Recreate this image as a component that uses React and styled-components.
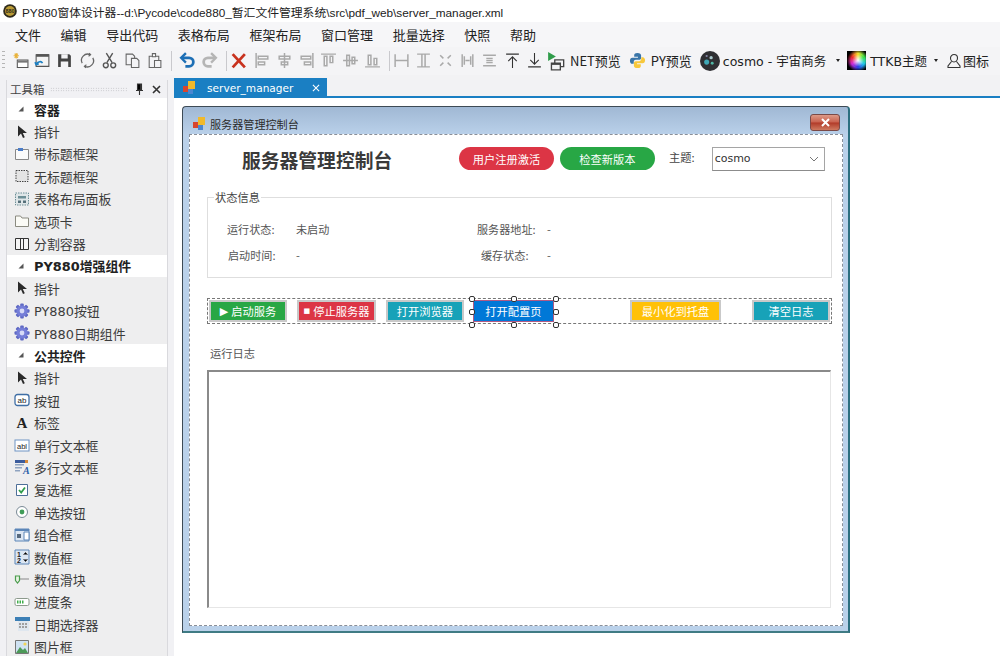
import React from 'react';
import styled, { createGlobalStyle } from 'styled-components';

const CJK = '"Noto Sans CJK SC", "Noto Sans", sans-serif';
const WIDE = '"DejaVu Sans", "Noto Sans CJK SC", sans-serif';

const Global = createGlobalStyle`
  html, body { margin: 0; padding: 0; background: #fff; }
  * { box-sizing: border-box; }
`;

const Page = styled.div`
  width: 1000px;
  height: 656px;
  overflow: hidden;
  display: flex;
  flex-direction: column;
  font-family: ${CJK};
  color: #333;
`;

const TitleBar = styled.div`
  height: 22px;
  display: flex;
  align-items: center;
  gap: 5px;
  padding-left: 3px;
  background: #fff;
  font-family: "Liberation Sans", "Noto Sans CJK SC", sans-serif;
  font-size: 11.8px;
  color: #222;
  white-space: nowrap;
`;

const MenuBar = styled.div`
  height: 25px;
  display: flex;
  align-items: center;
  padding-left: 15px;
  background: #f6f6f8;
`;

const MenuItem = styled.span`
  font-size: 13px;
  color: #222;
  margin-right: 19.6px;
  white-space: nowrap;
`;

const ToolBar = styled.div`
  height: 28px;
  display: flex;
  align-items: center;
  padding: 0 0 1px 2px;
  background: #f4f4f6;
  font-size: 13px;
  color: #222;
  white-space: nowrap;
`;

const Grip = styled.div`
  width: 3px;
  height: 20px;
  margin-right: 4px;
  background: repeating-linear-gradient(to bottom, #b5b5b5 0 1px, transparent 1px 4px);
`;

const ToolBtn = styled.div`
  width: 22px;
  height: 22px;
  flex: none;
  display: flex;
  align-items: center;
  justify-content: center;
  margin-left: ${({ $left }) => $left || 0}px;
  & > svg {
    width: ${({ $big }) => ($big ? 20 : 17)}px;
    height: ${({ $big }) => ($big ? 20 : 17)}px;
  }
`;

const ToolSep = styled.div`
  width: 1px;
  height: 20px;
  margin: 0 ${({ $right }) => $right}px 0 ${({ $left }) => $left}px;
  background: #c9c9cd;
  flex: none;
`;

const ToolLabel = styled.span`
  font-family: ${({ $wide }) => ($wide ? WIDE : CJK)};
  font-size: ${({ $wide }) => ($wide ? 12.5 : 13)}px;
  margin-left: ${({ $left }) => $left || 0}px;
  margin-right: ${({ $right }) => $right || 0}px;
`;

const Caret = styled.span`
  width: 0;
  height: 0;
  flex: none;
  border-left: 2.5px solid transparent;
  border-right: 2.5px solid transparent;
  border-top: 3px solid #222;
  margin-left: ${({ $left }) => $left}px;
  margin-right: ${({ $right }) => $right}px;
`;

const Rainbow = styled.div`
  width: 19px;
  height: 19px;
  flex: none;
  background:
    radial-gradient(circle at 58% 50%, #fff 0, rgba(255,255,255,0) 42%),
    radial-gradient(circle at 58% 50%, rgba(0,0,0,0) 48%, #000 76%),
    conic-gradient(from 0deg at 58% 50%, #f6e32a, #37e04a, #20c8e8, #2b3ce8, #d02ad8, #f02a2a, #f6e32a);
`;

const Body = styled.div`
  flex: 1;
  min-height: 0;
  display: flex;
`;

const Sidebar = styled.div`
  width: 174px;
  flex: none;
  padding: 5px 6px 0 6px;
  background: #f1f1f4;
`;

const Panel = styled.div`
  height: 100%;
  border-left: 1px solid #d9d9dd;
  border-right: 1px solid #d9d9dd;
  background: #eeeeef;
`;

const PanelHead = styled.div`
  height: 18px;
  display: flex;
  align-items: center;
  padding: 0 6px 0 3px;
  background: #f1f1f4;
  font-size: 11.5px;
  color: #444;
`;

const HeadDots = styled.div`
  flex: 1;
  height: 5px;
  margin: 0 8px 0 5px;
  background-image: radial-gradient(#b8b8bc 0.6px, transparent 0.7px);
  background-size: 2.5px 2.5px;
`;

const HeadGap = styled.span`
  width: 8px;
`;

const Row = styled.div`
  height: 22.4px;
  display: flex;
  align-items: center;
  padding-left: ${({ $section }) => ($section ? 10 : 6)}px;
  background: ${({ $section }) => ($section ? '#ffffff' : 'transparent')};
  font-family: ${WIDE};
  font-size: 12.9px;
  font-weight: ${({ $section }) => ($section ? 700 : 400)};
  color: ${({ $section }) => ($section ? '#222' : '#3c3c3c')};
  white-space: nowrap;
`;

const RowIcon = styled.div`
  width: ${({ $section }) => ($section ? 17 : 21)}px;
  height: 16px;
  flex: none;
  display: flex;
  align-items: center;
  justify-content: ${({ $section }) => ($section ? 'flex-start' : 'center')};
  padding-right: ${({ $section }) => ($section ? 0 : 3)}px;
`;

const Main = styled.div`
  flex: 1;
  min-width: 0;
  display: flex;
  flex-direction: column;
  background: #fff;
`;

const TabStrip = styled.div`
  height: 23px;
  flex: none;
  display: flex;
  align-items: flex-end;
  background: #f2f2f4;
  border-bottom: 2px solid #1a7fc3;
`;

const Tab = styled.div`
  width: 153px;
  height: 18px;
  display: flex;
  align-items: center;
  padding: 1px 7px 0 8px;
  background: #1a7fc3;
  color: #fff;
  font-family: ${WIDE};
  font-size: 10.6px;
`;

const TabName = styled.span`
  flex: 1;
  margin-left: 9px;
`;

const Canvas = styled.div`
  flex: 1;
  padding: 8px 0 0 8px;
`;

const FormWindow = styled.div`
  width: 668px;
  height: 527px;
  display: flex;
  flex-direction: column;
  padding: 0 5px 5px 6px;
  border: 1px solid #3d4a55;
  border-bottom: 2px solid #3f7b84;
  border-right: 2px solid #2c6f80;
  border-radius: 4px 4px 0 0;
  background: linear-gradient(to bottom, #a0b8d4 0, #bad1ea 28px, #bad1ea 100%);
`;

const FormTitle = styled.div`
  height: 27px;
  flex: none;
  display: flex;
  align-items: center;
  padding: 6px 0 0 3px;
  font-size: 11.1px;
  color: #2c2c2c;
`;

const FormTitleText = styled.span`
  flex: 1;
  margin-left: 2px;
`;

const CloseBtn = styled.div`
  width: 30px;
  height: 17px;
  margin: -2px 3px 0 0;
  display: flex;
  align-items: center;
  justify-content: center;
  border: 1px solid #7a4a48;
  border-radius: 3px;
  background: linear-gradient(to bottom, #dd9a88 0, #c9614e 48%, #b13a28 52%, #cf7a60 100%);
`;

const DesignSurface = styled.div`
  flex: 1;
  position: relative;
  padding: 11px 10px 17px 17px;
  background: #fff;
  border: 1px dashed #8a8f98;
  display: flex;
  flex-direction: column;
`;

const HeaderRow = styled.div`
  height: 25px;
  display: flex;
  align-items: center;
  flex: none;
`;

const Heading = styled.div`
  font-size: 18.8px;
  font-weight: 700;
  color: #3a3a3a;
  margin: 2px 0 0 35px;
  width: 217px;
  white-space: nowrap;
`;

const Pill = styled.div`
  width: 95px;
  height: 23px;
  margin-right: 6px;
  border-radius: 12px;
  display: flex;
  align-items: center;
  justify-content: center;
  background: ${({ $color }) => $color};
  color: #fff;
  font-size: 11.25px;
`;

const ThemeLabel = styled.div`
  font-size: 11.25px;
  color: #444;
  margin: -3px 17px 0 8px;
  white-space: nowrap;
`;

const Combo = styled.div`
  width: 113px;
  height: 24px;
  display: flex;
  align-items: center;
  justify-content: space-between;
  padding: 0 5px 0 2px;
  border: 1px solid #a5a5a5;
  border-bottom-color: #8c8c8c;
  font-family: ${WIDE};
  font-size: 11px;
  color: #333;
`;

const GroupBox = styled.div`
  position: relative;
  height: 81px;
  margin-top: 26px;
  flex: none;
  border: 1px solid #dedede;
  padding: 18px 0 0 19px;
  display: grid;
  grid-template-columns: 69px 181px 70px 1fr;
  grid-auto-rows: 26px;
  align-items: center;
  font-size: 11.1px;
  color: #555;
`;

const Legend = styled.div`
  position: absolute;
  top: -8px;
  left: 6px;
  padding: 0 1px;
  background: #fff;
  font-size: 11.25px;
  line-height: 15px;
  color: #444;
`;

const FieldLabel = styled.span`
  padding-left: ${({ $indent }) => $indent || 0}px;
  white-space: nowrap;
`;

const ButtonStrip = styled.div`
  height: 26px;
  margin-top: 20px;
  flex: none;
  display: flex;
  align-items: center;
  width: 625px;
  border: 1px dashed #777;
`;

const ActionBtn = styled.div`
  position: relative;
  width: ${({ $width }) => $width}px;
  height: 22px;
  margin-left: ${({ $left }) => $left}px;
  flex: none;
  display: flex;
  align-items: center;
  justify-content: center;
  background: ${({ $color }) => $color};
  border: 2px solid #c9c9c9;
  color: #fff;
  font-size: 11.25px;
  white-space: nowrap;
`;

const SelectedBtn = styled(ActionBtn)`
  border: 1px solid #b05a86;
`;

const Glyph = styled.span`
  font-family: "DejaVu Sans", sans-serif;
  font-size: ${({ $size }) => $size}px;
  margin-right: ${({ $gap }) => $gap}px;
`;

const Handle = styled.span`
  position: absolute;
  left: ${({ $x }) => $x}px;
  top: ${({ $y }) => $y}px;
  width: 6px;
  height: 6px;
  border: 1px solid #333;
  border-radius: 2px;
  background: #fff;
`;

const LogLabel = styled.div`
  margin: 21px 0 0 3px;
  height: 16px;
  line-height: 16px;
  flex: none;
  font-size: 11.25px;
  color: #555;
`;

const LogBox = styled.div`
  flex: 1;
  width: 624px;
  margin-top: 9px;
  background: #fff;
  border-top: 2px solid #8a8a8a;
  border-left: 2px solid #8a8a8a;
  border-right: 1px solid #e6e6e6;
  border-bottom: 1px solid #e6e6e6;
`;

/* small drawings */
const Svg = ({ children, w = 16, h = 16 }) => (
  <svg width={w} height={h} viewBox={`0 0 ${w} ${h}`} fill="none">{children}</svg>
);

const Gray = ({ d }) => (
  <Svg><path d={d} stroke="#a9a9a9" strokeWidth="1.4" /></Svg>
);

const ALIGN = [
  'M2 1v14M4 4h9v2.5H4zM4 9.5h6V12H4z',
  'M8 1v14M3 4h10v2.5H3zM5 9.5h6V12H5z',
  'M14 1v14M3 4h9v2.5H3zM6 9.5h6V12H6z',
  'M1 2h14M4 4v9h2.5V4zM9.5 4v6H12V4z',
  'M1 8h14M4.5 3v10H7V3zM9.5 5v6H12V5z',
  'M1 14h14M4 3v9h2.5V3zM9.5 6v6H12V6z',
];
const SIZE = [
  'M2 2v12M14 2v12M2 8h12',
  'M2 2h12M2 14h12M6.5 2v12M9.5 2v12',
  'M3 3l3 3M13 3l-3 3M3 13l3-3M13 13l-3-3',
  'M3 2v12M13 2v12M6 8h4M5 4v8M11 4v8',
  'M2 3h12M2 13h12M5 8h6M5 6h6M5 10h6',
];

const FormIcon = () => (
  <Svg>
    <path d="M4 1v5M1.500 3.500h5M2.500 1.500l3 4M5.500 1.500l-3 4" stroke="#e8b23c" strokeWidth="1" />
    <path d="M5 7.500h10v7H5z" fill="#fff" stroke="#555" />
    <path d="M5 8h10v2H5z" fill="#777" />
  </Svg>
);
const OpenIcon = () => (
  <Svg>
    <path d="M2 2.500h12v11H2z" fill="#f4f4f4" stroke="#555" />
    <path d="M2 2h12v2.500H2z" fill="#555" />
    <path d="M2 11.500c2-3 5-3 6-1M1 9.500l1 2.500 2.500-1" stroke="#1b7fc3" strokeWidth="1.500" />
  </Svg>
);
const SaveIcon = () => (
  <Svg>
    <path d="M2 2h10.500L14 3.500V14H2z" fill="#444" />
    <path d="M5 2h6v4H5zM4.500 9h7v5h-7z" fill="#f4f4f6" />
  </Svg>
);
const RefreshIcon = () => (
  <Svg>
    <path d="M3 10.500A5.800 5.800 0 0 1 10.500 2.500M13 5.500A5.800 5.800 0 0 1 5.500 13.500" stroke="#666" strokeWidth="1.200" />
    <path d="M9.500 1l1.500 1.500L9 4M6.500 15L5 13.500 7 12" stroke="#666" />
  </Svg>
);
const CutIcon = () => (
  <Svg>
    <path d="M5 1l5.500 9M11 1L5.500 10" stroke="#555" strokeWidth="1.300" />
    <circle cx="4.500" cy="12.500" r="2.300" stroke="#555" strokeWidth="1.300" />
    <circle cx="11.500" cy="12.500" r="2.300" stroke="#555" strokeWidth="1.300" />
  </Svg>
);
const CopyIcon = () => (
  <Svg>
    <path d="M2 2h6l2 2v8H2z" fill="#f4f4f6" stroke="#666" />
    <path d="M7 6h5l2 2v6.500H7z" fill="#f4f4f6" stroke="#666" />
  </Svg>
);
const PasteIcon = () => (
  <Svg>
    <path d="M3 4h9v10.500H3z" fill="#f4f4f6" stroke="#666" />
    <path d="M6 1.500h3v3H6z" fill="#fff" stroke="#666" />
    <path d="M8 8h6v6.500H8z" fill="#f4f4f6" stroke="#666" />
  </Svg>
);
const UndoIcon = ({ color = '#1d6fb5', flip }) => (
  <Svg>
    <g transform={flip ? 'matrix(-1 0 0 1 16 0)' : undefined}>
      <path d="M3 5.500h6.500a3.800 3.800 0 0 1 0 8H6" stroke={color} strokeWidth="2.600" />
      <path d="M6.500 1L2 5.500 6.500 10" stroke={color} strokeWidth="2.200" />
    </g>
  </Svg>
);
const CrossIcon = () => (
  <Svg><path d="M2.500 2l11.500 12.500M14 2L2.500 14.500" stroke="#c8321e" strokeWidth="2.600" /></Svg>
);
const UpIcon = () => (
  <Svg><path d="M2 2h12M8 4.500V15M4 8.500l4-4 4 4" stroke="#333" strokeWidth="1" /></Svg>
);
const DownIcon = () => (
  <Svg><path d="M2 14h12M8 1v10.500M4 7.500l4 4 4-4" stroke="#333" strokeWidth="1" /></Svg>
);
const NetIcon = () => (
  <Svg w={18} h={18}>
    <path d="M1 1l7 4-7 4z" fill="#2f9c4a" />
    <path d="M7 8h8v6H7z" stroke="#444" strokeWidth="1.200" />
    <path d="M4 11h8v6H4z" fill="#f4f4f6" stroke="#444" strokeWidth="1.200" />
    <path d="M4 11h8v1.500H4z" fill="#444" />
  </Svg>
);
const PythonIcon = () => (
  <Svg w={18} h={18}>
    <path d="M9 1C6 1 5.500 2.200 5.500 3.500V5H9.500v1H3.500C2 6 1 7.300 1 9.200s1 3.300 2.500 3.300H5V10.500c0-1.200 1-2.200 2.200-2.200h3.600c1.100 0 2-.9 2-2V3.500C12.800 2 11.500 1 9 1z" fill="#3a75a8" />
    <path d="M9 17c3 0 3.500-1.200 3.500-2.500V13H8.500v-1h6c1.500 0 2.500-1.300 2.500-3.200s-1-3.300-2.500-3.300H13v2c0 1.200-1 2.200-2.200 2.200H7.200c-1.100 0-2 .9-2 2v2.800C5.200 16 6.500 17 9 17z" fill="#f7c83c" />
  </Svg>
);
const CosmoIcon = () => (
  <Svg w={18} h={18}>
    <circle cx="9" cy="9" r="9" fill="#2f2f33" />
    <circle cx="6" cy="10" r="2.300" fill="#3fa7b5" />
    <circle cx="10" cy="6" r="1.500" fill="#a8c8cc" />
    <circle cx="11" cy="11" r="1.300" fill="#4fb7a5" />
    <circle cx="6" cy="4.500" r="1" fill="#88a" />
  </Svg>
);
const PersonIcon = () => (
  <Svg w={14} h={16}>
    <path d="M7 1.500a3.500 3.500 0 0 1 3.500 3.500c0 2-1.500 4-3.500 4S3.500 7 3.500 5A3.500 3.500 0 0 1 7 1.500zM4.500 8.500L1 13v1.500h12V13L9.500 8.500" stroke="#333" strokeWidth="1.100" />
  </Svg>
);
const GroupWin = () => (
  <svg width="16" height="15" viewBox="0 0 16 15">
    <path d="M1 6h6v6H1z" fill="#d8452f" />
    <path d="M6 1h7v8H6z" fill="#f0b92c" />
    <path d="M6 9h5v5H6z" fill="#4b86d0" />
  </svg>
);
const AppLogo = () => (
  <svg width="14" height="14" viewBox="0 0 14 14">
    <circle cx="7" cy="7" r="6.800" fill="#2e2a1c" />
    <circle cx="7" cy="7" r="5" fill="#b99a34" />
    <text x="7" y="9" textAnchor="middle" fontSize="5.500" fontWeight="700" fontFamily="Liberation Sans" fill="#2e2a1c">880</text>
  </svg>
);

const Arrow = () => (
  <Svg><path d="M4 1.500v11l3-3 2 4.500 1.800-.8L8.800 9H13z" fill="#2a2a2a" /></Svg>
);
const Gear = () => (
  <Svg>
    <g fill="#5f69c4">
      {[0, 45, 90, 135].map((a) => (
        <rect key={a} x="6.200" y="0.500" width="3.600" height="15" rx="1" transform={`rotate(${a} 8 8)`} />
      ))}
    </g>
    <circle cx="8" cy="8" r="5.600" fill="#757ed8" />
    <circle cx="8" cy="8" r="2.400" fill="#d7dbf7" />
  </Svg>
);
const IconPanelTitled = () => (
  <Svg><path d="M1.500 3.500h13v10h-13z" fill="#fbfbfb" stroke="#888" /><path d="M4 2h5v3H4z" fill="#4a7cc8" /></Svg>
);
const IconPanelPlain = () => (
  <Svg><path d="M2 2.500h12v11H2z" fill="#e4e4e4" stroke="#444" strokeDasharray="1.500 1" /></Svg>
);
const IconTable = () => (
  <Svg>
    <path d="M1.500 2h13v12h-13z" fill="#dfe6e8" stroke="#6d8f96" strokeDasharray="1.500 1" />
    <path d="M4 5h8v2.500H4z" fill="#6d8f96" /><path d="M4 9.500h3V12H4zM9 9.500h3V12H9z" fill="#56707a" />
  </Svg>
);
const IconFolderTab = () => (
  <Svg><path d="M1.500 3h5l1.500 2h6.500v8.500h-13z" fill="#fbfbf6" stroke="#8b8b80" /></Svg>
);
const IconSplit = () => (
  <Svg><path d="M1.500 2.500h13v11h-13zM6.500 2.500v11M9.500 2.500v11" stroke="#333" fill="#f5f5f5" /></Svg>
);
const IconButton = () => (
  <svg width="16" height="14" viewBox="0 0 16 14">
    <rect x="1" y="1.500" width="14" height="11" rx="2.500" fill="#fff" stroke="#3f6ea5" strokeWidth="1.300" />
    <text x="8" y="10" textAnchor="middle" fontSize="8" fontFamily="Liberation Sans" fill="#222">ab</text>
  </svg>
);
const IconLabel = () => (
  <svg width="16" height="16" viewBox="0 0 16 16">
    <text x="8" y="13" textAnchor="middle" fontSize="15" fontWeight="700" fontFamily="Liberation Serif" fill="#222">A</text>
  </svg>
);
const IconTextBox = () => (
  <svg width="16" height="13" viewBox="0 0 16 13">
    <rect x="1" y="1" width="14" height="11" fill="#fff" stroke="#6f94c4" />
    <text x="8" y="9.500" textAnchor="middle" fontSize="7.500" fontFamily="Liberation Sans" fill="#222">abl</text>
  </svg>
);
const IconMultiText = () => (
  <svg width="16" height="16" viewBox="0 0 16 16">
    <path d="M1 1h10v3H1z" fill="#3c5c9c" /><path d="M1 5h9v1.500H1zM1 8h7v1.500H1zM1 11h5v1.500H1z" fill="#8fa3c0" />
    <text x="9" y="15" fontSize="10" fontWeight="700" fontStyle="italic" fontFamily="Liberation Serif" fill="#2f5fa8">A</text>
    <path d="M11 1h3v3h-3z" fill="#d88a3a" />
  </svg>
);
const IconCheck = () => (
  <Svg>
    <path d="M2.500 2.500h11v11h-11z" fill="#fff" stroke="#4d6f98" />
    <path d="M5 8l2.200 2.500L11 5.500" stroke="#2f9c4a" strokeWidth="1.800" />
  </Svg>
);
const IconRadio = () => (
  <Svg>
    <circle cx="8" cy="8" r="5.500" fill="#fff" stroke="#7a8a96" />
    <circle cx="8" cy="8" r="2.400" fill="#3f9c58" />
  </Svg>
);
const IconCombo = () => (
  <Svg>
    <path d="M1 2h14v12H1z" fill="#dce6f2" stroke="#5c86b8" />
    <path d="M1 2h14v2H1z" fill="#5c86b8" />
    <path d="M10 5h5v8h-5z" fill="#fff" stroke="#5c86b8" />
    <path d="M3 7h4v4H3z" fill="#56697e" />
  </Svg>
);
const IconNumber = () => (
  <svg width="16" height="16" viewBox="0 0 16 16">
    <path d="M1 1h14v14H1z" fill="#dce6f2" stroke="#5c86b8" />
    <text x="5" y="7.500" textAnchor="middle" fontSize="7" fontWeight="700" fontFamily="Liberation Sans" fill="#222">1</text>
    <text x="5" y="14" textAnchor="middle" fontSize="7" fontWeight="700" fontFamily="Liberation Sans" fill="#222">2</text>
    <path d="M9.500 5.500L11.500 3.500 13.500 5.500M9.500 10.500l2 2 2-2" stroke="#444" />
  </svg>
);
const IconSlider = () => (
  <Svg>
    <path d="M5 8h10" stroke="#999" strokeWidth="1.200" />
    <path d="M1.500 5h4v4.500L3.500 12l-2-2.500z" fill="#e8f3e4" stroke="#4b9c4d" strokeWidth="1.200" />
  </Svg>
);
const IconProgress = () => (
  <Svg>
    <rect x="1" y="4.500" width="14" height="7" rx="1.500" fill="#fff" stroke="#8c9a8c" />
    <path d="M3 6.500h1.500v3H3zM5.500 6.500H7v3H5.500zM8 6.500h1.500v3H8z" fill="#3fae4a" />
  </Svg>
);
const IconDate = () => (
  <Svg>
    <path d="M4 1h11v14H4z" fill="#dfe7ef" />
    <path d="M1 1h15v4H1z" fill="#3c7fb5" />
    <path d="M5 7h2v2H5zM8 7h2v2H8zM11 7h2v2h-2zM5 10h2v2H5zM8 10h2v2H8zM11 10h2v2h-2z" fill="#a0a0a0" />
  </Svg>
);
const IconPicture = () => (
  <Svg>
    <path d="M1.500 1.500h13v13h-13z" fill="#cfe2f2" stroke="#777" />
    <path d="M2 14l4-6 3 3 2-2 3 5z" fill="#4c9a58" />
    <circle cx="11" cy="5" r="1.600" fill="#f2d458" />
  </Svg>
);
const Wedge = () => (
  <Svg w={8} h={8}><path d="M6.500 1.500v5h-5z" fill="#555" /></Svg>
);
const SmallX = ({ color = '#333', size = 9, width = 1.6 }) => (
  <svg width={size} height={size} viewBox="0 0 9 9"><path d="M1 1l7 7M8 1L1 8" stroke={color} strokeWidth={width} /></svg>
);
const Pin = () => (
  <svg width="9" height="12" viewBox="0 0 9 12"><path d="M2.500 1h4v6h-4zM1 7.500h7M4.500 8v4M5.500 1v6" stroke="#333" strokeWidth="1.100" /></svg>
);
const Chevron = () => (
  <svg width="10" height="6" viewBox="0 0 10 6"><path d="M1 1l4 4 4-4" stroke="#777" strokeWidth="1" fill="none" /></svg>
);

const MENUS = ['文件', '编辑', '导出代码', '表格布局', '框架布局', '窗口管理', '批量选择', '快照', '帮助'];

const TOOLBOX = [
  { title: '容器' },
  { icon: <Arrow />, name: '指针' },
  { icon: <IconPanelTitled />, name: '带标题框架' },
  { icon: <IconPanelPlain />, name: '无标题框架' },
  { icon: <IconTable />, name: '表格布局面板' },
  { icon: <IconFolderTab />, name: '选项卡' },
  { icon: <IconSplit />, name: '分割容器' },
  { title: 'PY880增强组件' },
  { icon: <Arrow />, name: '指针' },
  { icon: <Gear />, name: 'PY880按钮' },
  { icon: <Gear />, name: 'PY880日期组件' },
  { title: '公共控件' },
  { icon: <Arrow />, name: '指针' },
  { icon: <IconButton />, name: '按钮' },
  { icon: <IconLabel />, name: '标签' },
  { icon: <IconTextBox />, name: '单行文本框' },
  { icon: <IconMultiText />, name: '多行文本框' },
  { icon: <IconCheck />, name: '复选框' },
  { icon: <IconRadio />, name: '单选按钮' },
  { icon: <IconCombo />, name: '组合框' },
  { icon: <IconNumber />, name: '数值框' },
  { icon: <IconSlider />, name: '数值滑块' },
  { icon: <IconProgress />, name: '进度条' },
  { icon: <IconDate />, name: '日期选择器' },
  { icon: <IconPicture />, name: '图片框' },
];

const HANDLES = [
  [-5, -5], [37, -5], [79, -5],
  [-5, 8], [79, 8],
  [-5, 21], [37, 21], [79, 21],
];

const App = () => (
  <Page>
    <Global />
    <TitleBar>
      <AppLogo />
      <span>PY880窗体设计器--d:\Pycode\code880_暂汇文件管理系统\src\pdf_web\server_manager.xml</span>
    </TitleBar>
    <MenuBar>
      {MENUS.map((m) => <MenuItem key={m}>{m}</MenuItem>)}
    </MenuBar>
    <ToolBar>
      <Grip />
      <ToolBtn><FormIcon /></ToolBtn>
      <ToolBtn><OpenIcon /></ToolBtn>
      <ToolBtn><SaveIcon /></ToolBtn>
      <ToolBtn $left={1}><RefreshIcon /></ToolBtn>
      <ToolBtn><CutIcon /></ToolBtn>
      <ToolBtn $left={1}><CopyIcon /></ToolBtn>
      <ToolBtn><PasteIcon /></ToolBtn>
      <ToolSep $left={6} $right={4} />
      <ToolBtn><UndoIcon /></ToolBtn>
      <ToolBtn><UndoIcon color="#b5b5b5" flip /></ToolBtn>
      <ToolSep $left={6} $right={0} />
      <ToolBtn><CrossIcon /></ToolBtn>
      {ALIGN.map((d, i) => <ToolBtn key={d} $left={i === 0 ? 2 : 0}><Gray d={d} /></ToolBtn>)}
      <ToolSep $left={6} $right={0} />
      {SIZE.map((d) => <ToolBtn key={d}><Gray d={d} /></ToolBtn>)}
      <ToolBtn $left={1}><UpIcon /></ToolBtn>
      <ToolBtn><DownIcon /></ToolBtn>
      <ToolBtn $left={1} $big><NetIcon /></ToolBtn>
      <ToolLabel $left={2} $right={6}>NET预览</ToolLabel>
      <ToolBtn><PythonIcon /></ToolBtn>
      <ToolLabel $left={2} $right={7}>PY预览</ToolLabel>
      <ToolBtn $big><CosmoIcon /></ToolBtn>
      <ToolLabel $left={2} $wide>cosmo - 宇宙商务</ToolLabel>
      <Caret $left={10} $right={7} />
      <Rainbow />
      <ToolLabel $left={4} $wide>TTKB主题</ToolLabel>
      <Caret $left={7} $right={9} />
      <PersonIcon />
      <ToolLabel $left={2}>图标</ToolLabel>
    </ToolBar>
    <Body>
      <Sidebar>
        <Panel>
          <PanelHead>
            工具箱
            <HeadDots />
            <Pin />
            <HeadGap />
            <SmallX />
          </PanelHead>
          {TOOLBOX.map((item, i) =>
            item.title ? (
              <Row key={i} $section>
                <RowIcon $section><Wedge /></RowIcon>
                {item.title}
              </Row>
            ) : (
              <Row key={i}>
                <RowIcon>{item.icon}</RowIcon>
                {item.name}
              </Row>
            )
          )}
        </Panel>
      </Sidebar>
      <Main>
        <TabStrip>
          <Tab>
            <GroupWin />
            <TabName>server_manager</TabName>
            <SmallX color="#fff" size={8} width={1.2} />
          </Tab>
        </TabStrip>
        <Canvas>
          <FormWindow>
            <FormTitle>
              <GroupWin />
              <FormTitleText>服务器管理控制台</FormTitleText>
              <CloseBtn><SmallX color="#fff" size={9} width={2} /></CloseBtn>
            </FormTitle>
            <DesignSurface>
              <HeaderRow>
                <Heading>服务器管理控制台</Heading>
                <Pill $color="#dc3545">用户注册激活</Pill>
                <Pill $color="#28a745">检查新版本</Pill>
                <ThemeLabel>主题:</ThemeLabel>
                <Combo>cosmo<Chevron /></Combo>
              </HeaderRow>
              <GroupBox>
                <Legend>状态信息</Legend>
                <FieldLabel>运行状态:</FieldLabel>
                <span>未启动</span>
                <FieldLabel>服务器地址:</FieldLabel>
                <span>-</span>
                <FieldLabel $indent={1}>启动时间:</FieldLabel>
                <span>-</span>
                <FieldLabel $indent={4}>缓存状态:</FieldLabel>
                <span>-</span>
              </GroupBox>
              <ButtonStrip>
                <ActionBtn $width={78} $left={1} $color="#28a745"><Glyph $size={11} $gap={3}>▶</Glyph>启动服务</ActionBtn>
                <ActionBtn $width={79} $left={10} $color="#dc3545"><Glyph $size={7} $gap={3}>■</Glyph>停止服务器</ActionBtn>
                <ActionBtn $width={78} $left={10} $color="#17a2b8">打开浏览器</ActionBtn>
                <SelectedBtn $width={81} $left={9} $color="#0078d7">
                  打开配置页
                  {HANDLES.map(([x, y]) => <Handle key={`${x}-${y}`} $x={x} $y={y} />)}
                </SelectedBtn>
                <ActionBtn $width={91} $left={76} $color="#ffc107">最小化到托盘</ActionBtn>
                <ActionBtn $width={78} $left={31} $color="#17a2b8">清空日志</ActionBtn>
              </ButtonStrip>
              <LogLabel>运行日志</LogLabel>
              <LogBox />
            </DesignSurface>
          </FormWindow>
        </Canvas>
      </Main>
    </Body>
  </Page>
);

export default App;
